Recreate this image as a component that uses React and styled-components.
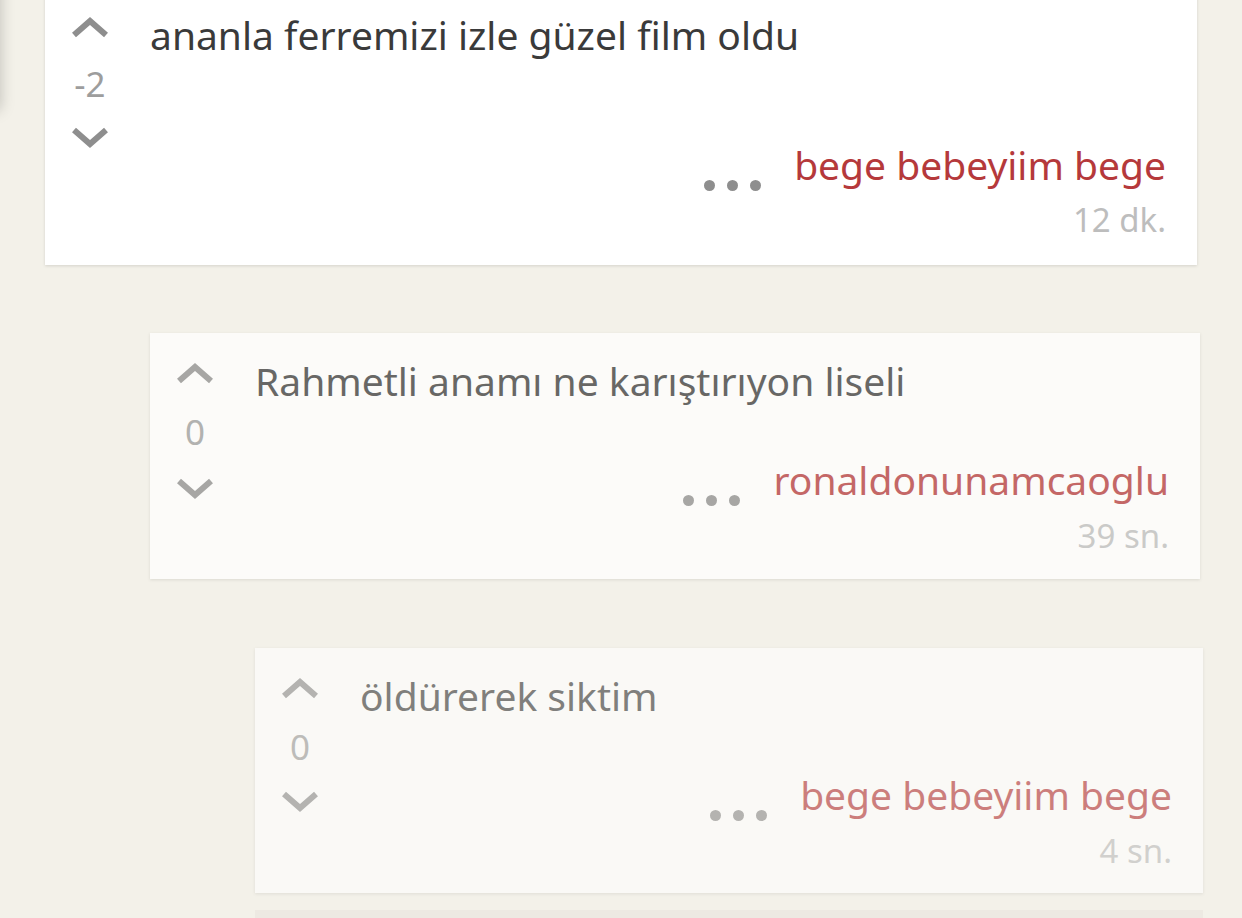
import React from "react";
import styled, { createGlobalStyle } from "styled-components";

const GlobalStyle = createGlobalStyle`
  html, body {
    margin: 0;
    padding: 0;
    background: #f3f1e9;
    font-family: "Noto Sans", "Open Sans", sans-serif;
    overflow: hidden;
  }
`;

const Page = styled.div`
  position: relative;
  width: 1242px;
  height: 918px;
  overflow: hidden;
`;

const DrawerEdge = styled.div`
  position: absolute;
  left: -300px;
  top: -40px;
  width: 300px;
  height: 150px;
  background: #f3f1e9;
  box-shadow: 0 0 14px rgba(0, 0, 0, 0.22);
`;

const Feed = styled.div`
  display: flex;
  flex-direction: column;
  margin-top: -13px;
`;

const Card = styled.div`
  display: flex;
  box-sizing: border-box;
  margin-left: ${(p) => 45 + p.depth * 105}px;
  width: ${(p) => 1152 - p.depth * 102}px;
  margin-bottom: ${(p) => p.gapAfter}px;
  padding: 30px 31px ${(p) => p.padBottom}px 0;
  background: #fff;
  opacity: ${(p) => p.fade};
  box-shadow: 0 1px 3px rgba(0, 0, 0, 0.13);
`;

const Placeholder = styled.div`
  margin-left: 255px;
  width: 948px;
  height: 40px;
  background: #ede9e2;
`;

const Votes = styled.div`
  width: 90px;
  flex-shrink: 0;
  display: flex;
  flex-direction: column;
  align-items: center;
  color: #8e8e8e;
`;

const Score = styled.div`
  font-size: 35px;
  line-height: 40px;
  margin: ${(p) => p.above}px 0 ${(p) => p.below}px;
  color: #9d9d9d;
`;

const Body = styled.div`
  flex: 1;
  margin-left: 15px;
  display: flex;
  flex-direction: column;
`;

const Text = styled.div`
  font-size: 39px;
  line-height: 52px;
  margin-top: -8px;
  color: #3a3a3a;
  margin-bottom: ${(p) => p.space}px;
`;

const Footer = styled.div`
  display: flex;
  justify-content: flex-end;
  align-items: baseline;
  gap: 33px;
`;

const Dots = styled.div`
  display: flex;
  gap: 12px;
  transform: translateY(11px);
`;

const Dot = styled.span`
  width: 11px;
  height: 11px;
  border-radius: 50%;
  background: #8e8e8e;
`;

const Author = styled.div`
  font-size: 39px;
  line-height: 52px;
  color: #b5393b;
`;

const Time = styled.div`
  text-align: right;
  font-size: 33px;
  line-height: 44px;
  margin-top: ${(p) => p.offset}px;
  color: #bdbdbd;
`;

const Chevron = ({ down }) => (
  <svg width="38" height="22" viewBox="0 0 38 22">
    <polyline
      points={down ? "3,4 19,18 35,4" : "3,18 19,4 35,18"}
      fill="none"
      stroke="currentColor"
      strokeWidth="6"
    />
  </svg>
);

const comments = [
  {
    depth: 0,
    fade: 1,
    score: "-2",
    text: "ananla ferremizi izle güzel film oldu",
    author: "bege bebeyiim bege",
    time: "12 dk.",
    space: 78,
    timeOffset: 7,
    above: 25,
    below: 22,
    padBottom: 23,
    gapAfter: 68,
  },
  {
    depth: 1,
    fade: 0.75,
    score: "0",
    text: "Rahmetli anamı ne karıştırıyon liseli",
    author: "ronaldonunamcaoglu",
    time: "39 sn.",
    space: 47,
    timeOffset: 8,
    above: 27,
    below: 25,
    padBottom: 21,
    gapAfter: 69,
  },
  {
    depth: 2,
    fade: 0.62,
    score: "0",
    text: "öldürerek siktim",
    author: "bege bebeyiim bege",
    time: "4 sn.",
    space: 47,
    timeOffset: 8,
    above: 27,
    below: 23,
    padBottom: 20,
    gapAfter: 17,
  },
];

export default function App() {
  return (
    <Page>
      <GlobalStyle />
      <DrawerEdge />
      <Feed>
        {comments.map((c, i) => (
          <Card
            key={i}
            depth={c.depth}
            fade={c.fade}
            padBottom={c.padBottom}
            gapAfter={c.gapAfter}
          >
            <Votes>
              <Chevron />
              <Score above={c.above} below={c.below}>
                {c.score}
              </Score>
              <Chevron down />
            </Votes>
            <Body>
              <Text space={c.space}>{c.text}</Text>
              <Footer>
                <Dots>
                  <Dot />
                  <Dot />
                  <Dot />
                </Dots>
                <Author>{c.author}</Author>
              </Footer>
              <Time offset={c.timeOffset}>{c.time}</Time>
            </Body>
          </Card>
        ))}
        <Placeholder />
      </Feed>
    </Page>
  );
}
